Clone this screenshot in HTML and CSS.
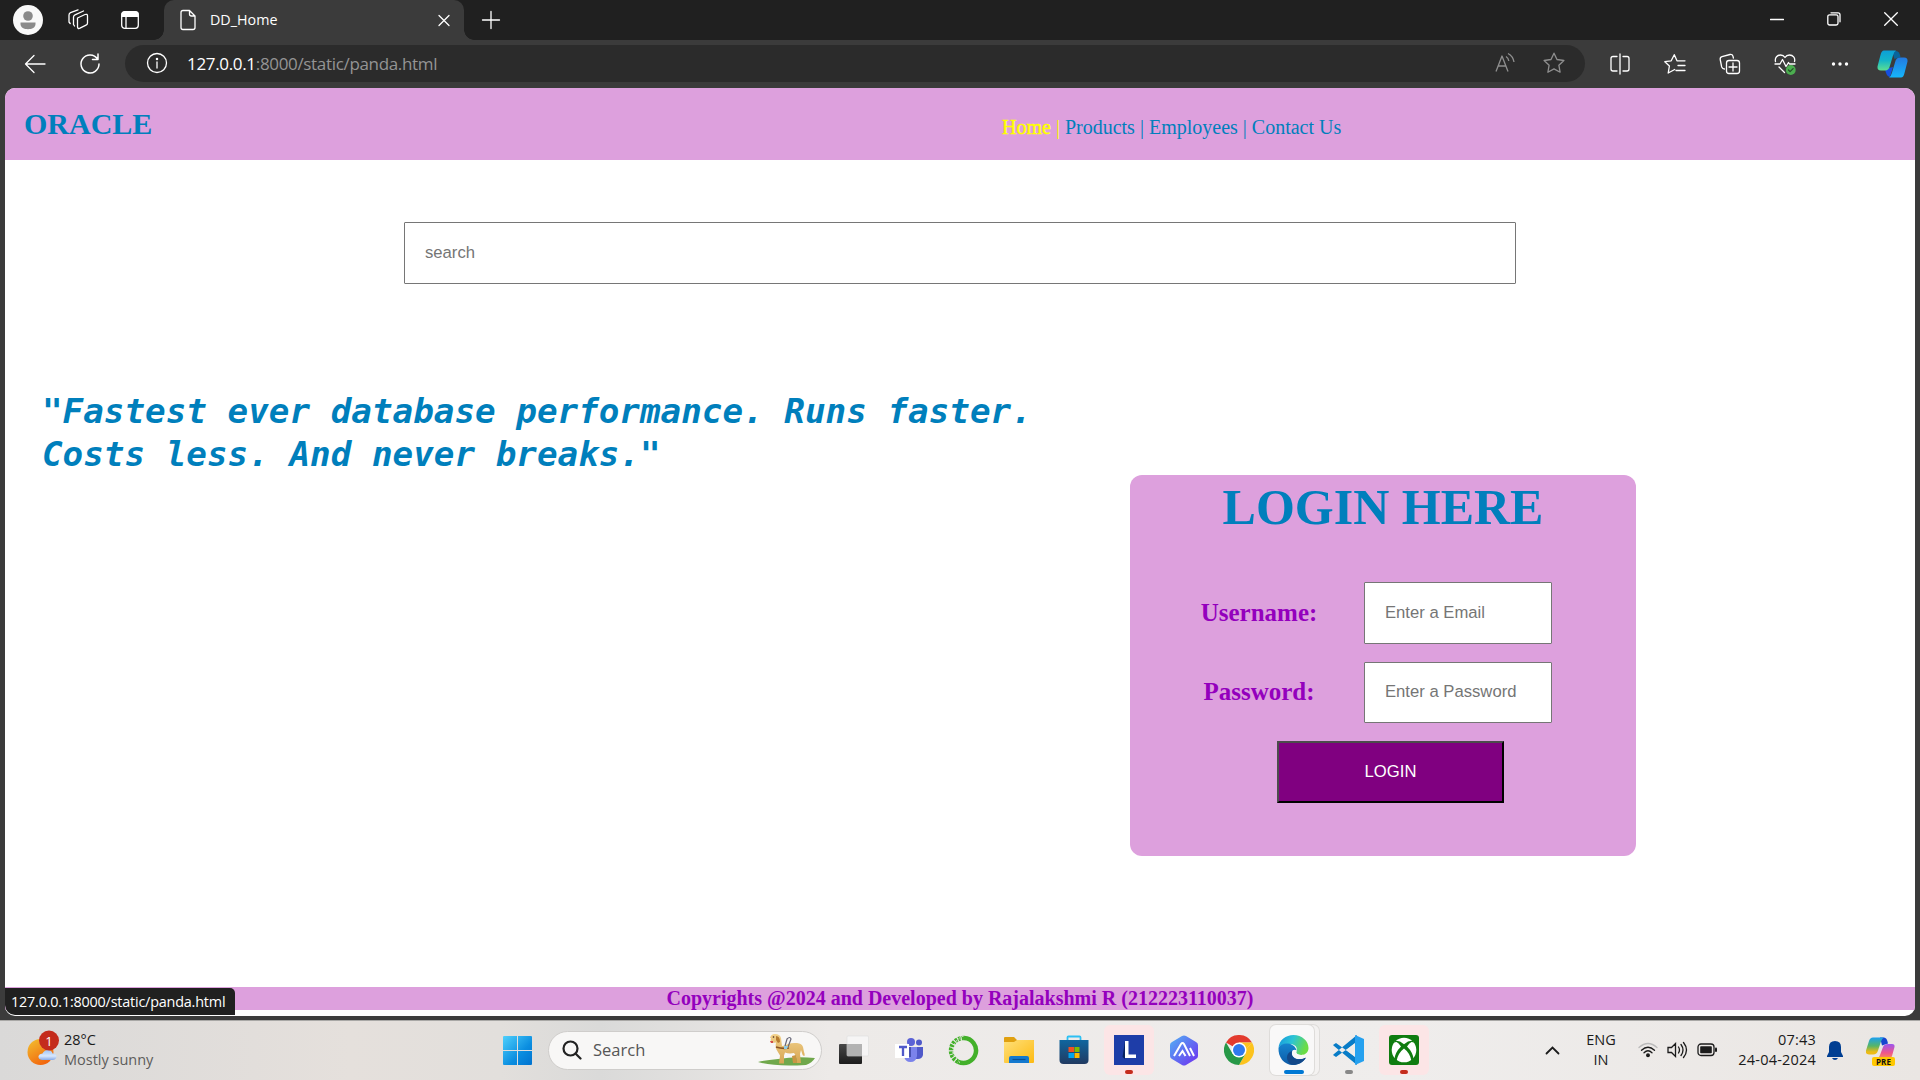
FILE: index.html
```html
<!DOCTYPE html>
<html lang="en">
<head>
<meta charset="utf-8">
<title>DD_Home</title>
<link rel="stylesheet" href="styles.css">
</head>
<body>
<div class="tabbar">
  <span class="slot w56"><svg width="30" height="30" viewBox="0 0 30 30"><circle cx="15" cy="15" r="15" fill="#f9f9f9"/><circle cx="15" cy="11" r="4.8" fill="#8a8a8a"/><path d="M7.5 17.5h15v1.5c0 3.500-3.500 5.200-7.500 5.200s-7.500-1.700-7.500-5.200z" fill="#8a8a8a"/></svg></span>
  <span class="slot w44"><svg class="line" width="22" height="22" viewBox="0 0 22 22"><path d="M10.500 9l7.500-3.500q2.500-.8 2.500 1.300v7.200q0 1.500-1.500 2.200l-6 3q-2.500 1-2.500-1.500zM6.500 15.500V8q0-1.500 1.500-2.200l8.500-3.800M6.500 15.500l1 1.500M2 13V6q0-1.600 1.500-2.300L11 .8M2 13l1.200 1.500"/></svg></span>
  <span class="slot w60"><svg width="20" height="20" viewBox="0 0 20 20"><rect x="1.700" y="1.700" width="16.600" height="16.600" rx="3" fill="none" stroke="#fff" stroke-width="1.300"/><path d="M1.500 7V4q0-2.500 2.500-2.500h12q2.500 0 2.500 2.500v3z" fill="#fff"/><path d="M6 7v11" stroke="#fff" stroke-width="1.300"/></svg></span>
  <div class="tab">
    <svg class="line" width="20" height="22" viewBox="0 0 20 22"><path d="M11.500 1.500H5q-2 0-2 2v15q0 2 2 2h10q2 0 2-2V7zM11.500 1.500V5q0 2 2 2H17"/></svg>
    <span class="tab-title">DD_Home</span>
    <svg class="line tab-close" width="20" height="20" viewBox="0 0 20 20"><path d="M5 5.500l10 10M15 5.500l-10 10"/></svg>
  </div>
  <span class="slot w53"><svg class="line" width="20" height="20" viewBox="0 0 20 20"><path d="M10 1.500v17M1.500 10h17"/></svg></span>
  <div class="window-buttons">
    <span class="slot w57"><svg class="line" width="14" height="14" viewBox="0 0 14 14"><path d="M.5 7.500h13"/></svg></span>
    <span class="slot w57"><svg class="line" width="14" height="14" viewBox="0 0 14 14"><rect x=".8" y="2.800" width="10.200" height="10.200" rx="1.800"/><path d="M4 .8h7q2 0 2 2v7"/></svg></span>
    <span class="slot w57"><svg class="line" width="14" height="14" viewBox="0 0 14 14"><path d="M.7.7l12.600 12.600M13.300.7L.7 13.300"/></svg></span>
  </div>
</div>

<div class="toolbar">
  <span class="slot w66"><svg class="line" width="22" height="20" viewBox="0 0 22 20"><path d="M10 1.500L1.500 10l8.500 8.500M1.500 10H21"/></svg></span>
  <span class="slot w44"><svg class="line thick" width="22" height="22" viewBox="0 0 22 22"><path d="M18.500 6A9 9 0 1 0 20 11M19 1v5.500h-5.500"/></svg></span>
  <div class="address">
    <svg class="line" width="22" height="22" viewBox="0 0 22 22"><circle cx="11" cy="11" r="9.500"/><path d="M11 10v6"/><circle cx="11" cy="7" r=".6"/></svg>
    <span class="url"><b>127.0.0.1</b>:8000/static/panda.html</span>
    <svg class="dim" width="22" height="22" viewBox="0 0 22 22"><path d="M2 19.500L8 4l6 15.500M4 14h8M12 4.500q2.500 1.500 2.800 4.500M14 1.500q5 2.500 6 8.500"/></svg>
    <svg class="dim" width="22" height="22" viewBox="0 0 22 22"><path d="M11 1.200l3 6.300 6.900 1-5 4.800 1.200 6.900-6.100-3.300-6.100 3.300 1.200-6.900-5-4.800 6.900-1z"/></svg>
  </div>
  <span class="slot w55 first"><svg class="line" width="22" height="22" viewBox="0 0 22 22"><path d="M8 3.500H4q-2 0-2 2v10.500q0 2 2 2h4M14 3.500h4q2 0 2 2v10.500q0 2-2 2h-4M11 1v20"/></svg></span>
  <span class="slot w55"><svg class="line" width="22" height="22" viewBox="0 0 22 22"><path d="M13 7.800L10.300 1.700 7.200 7.800l-6.400.9L5.400 13l-1.200 7 6.500-3.500M13 7.800H21M14 12.500h7M12 17.500h9"/></svg></span>
  <span class="slot w55"><svg class="line" width="22" height="22" viewBox="0 0 22 22"><rect x="7.500" y="7.500" width="13" height="13" rx="2.500"/><path d="M14 10v8M10 14h8M5.500 16q-2 0-2.800-2L1.200 6.500q-.3-2.200 1.800-2.800l8-2.200q2.300-.4 3 1.800l.4 1.700"/></svg></span>
  <span class="slot w55"><svg class="line" width="22" height="22" viewBox="0 0 22 22"><path d="M1.500 8.500C.5 4.500 3.500 2 6.500 2q3 0 4.500 2.500Q12.500 2 15.500 2c3.500 0 6 3 5 6.500M1 11h5l2.500-4.500 3.500 7 2.500-4L15.500 11H21M5 14l5.500 5.500"/><circle cx="16.800" cy="17" r="4.900" fill="#4cae50" stroke="none"/><path d="M14.500 17l1.600 1.600 3-3" stroke="#254f27"/></svg></span>
  <span class="slot w55"><svg width="18" height="6" viewBox="0 0 18 6"><circle cx="2.500" cy="3" r="1.700" fill="#fff"/><circle cx="9" cy="3" r="1.700" fill="#fff"/><circle cx="15.500" cy="3" r="1.700" fill="#fff"/></svg></span>
  <span class="slot w51"><svg width="31" height="28" viewBox="0 0 31 28"><defs><linearGradient id="ca" x1="0" y1="0" x2="0" y2="1"><stop offset="0" stop-color="#0c9fd8"/><stop offset=".5" stop-color="#14b5c8"/><stop offset="1" stop-color="#5ddf91"/></linearGradient><linearGradient id="cb" x1="0" y1="0" x2="0" y2="1"><stop offset="0" stop-color="#2379e0"/><stop offset="1" stop-color="#15b6fb"/></linearGradient></defs><path d="M15 1h4q3.500 0 4.500 6l-6 2z" fill="#08649b"/><path d="M8 19l8-2-3 10q-4-1-5-8z" fill="#1550e0"/><path d="M7 .5h12q-2 1-3 5l-3 10q-1 5-5 5H4q-4 0-3.500-4L3.500 5Q4.500.5 7 .5z" fill="url(#ca)"/><path d="M24 27.500H12q2-1 3-5l3-10q1-5 5-5h4q4 0 3.500 4L27.500 23q-1 4.500-3.500 4.500z" fill="url(#cb)"/></svg></span>
</div>

<main class="viewport">
  <header class="site-header">
    <h1 class="brand">ORACLE</h1>
    <nav class="site-nav"><a class="current"><span class="strong">Home</span> | </a><a>Products | </a><a>Employees | </a><a>Contact Us</a></nav>
  </header>
  <input class="field search" type="text" placeholder="search">
  <div class="hero">
    <p class="quote">"Fastest ever database performance. Runs faster.<br>Costs less. And never breaks."</p>
    <form class="login">
      <h2 class="login-title">LOGIN HERE</h2>
      <div class="row"><label class="label">Username:</label><input class="field" type="text" placeholder="Enter a Email"></div>
      <div class="row"><label class="label second">Password:</label><input class="field short" type="password" placeholder="Enter a Password"></div>
      <button class="submit" type="button">LOGIN</button>
    </form>
  </div>
  <footer class="site-footer">Copyrights @2024 and Developed by Rajalakshmi R (212223110037)</footer>
  <div class="status">127.0.0.1:8000/static/panda.html</div>
</main>

<div class="taskbar">
  <div class="weather">
    <svg width="34" height="36" viewBox="0 0 34 36"><defs><linearGradient id="sun" x1="0" y1="0" x2=".6" y2="1"><stop offset="0" stop-color="#f2c230"/><stop offset="1" stop-color="#f2650d"/></linearGradient><linearGradient id="cl" x1="0" y1="0" x2="0" y2="1"><stop offset="0" stop-color="#9fc4f5"/><stop offset=".6" stop-color="#d9e8fc"/><stop offset="1" stop-color="#86a9e8"/></linearGradient></defs><circle cx="13.500" cy="22" r="13" fill="url(#sun)"/><path d="M15 30q-4-.5-3.500-4 .8-2.500 4-2.500 2-4 6-3.500 3.500.5 4 3.500 4 0 4 3.200-.3 3-4 3.300z" fill="url(#cl)"/><circle cx="22" cy="10.500" r="10" fill="#c42b1c"/></svg>
    <span class="badge">1</span>
    <div class="weather-text"><div>28°C</div><div class="muted">Mostly sunny</div></div>
  </div>
  <span class="slot w55"><svg width="29" height="29" viewBox="0 0 29 29"><defs><linearGradient id="win" x1="0" y1="0" x2="1" y2="1"><stop offset="0" stop-color="#4fd0fc"/><stop offset=".6" stop-color="#0b8ee0"/><stop offset="1" stop-color="#0072cf"/></linearGradient></defs><path d="M1 0h13v14H0V1q0-1 1-1zM15 0h13q1 0 1 1v13H15zM0 15h14v14H1q-1 0-1-1zM15 15h14v13q0 1-1 1H15z" fill="url(#win)"/></svg></span>
  <div class="searchbox">
    <svg width="20" height="20" viewBox="0 0 20 20" fill="none" stroke="#222" stroke-width="2.200" stroke-linecap="round"><circle cx="8.500" cy="8.500" r="7"/><path d="M13.500 13.500l5 5"/></svg>
    <span>Search</span>
    <svg class="dog" width="57" height="34" viewBox="0 0 57 34"><defs><linearGradient id="fur" x1="0" y1="0" x2="0" y2="1"><stop offset="0" stop-color="#f2d28c"/><stop offset="1" stop-color="#d6a552"/></linearGradient></defs><path d="M0 29q8-2 20-3 18-3 37-1-3 5-9 7-32 2-48-3z" fill="#70a84c"/><path d="M12 5q1-4 5-4 5 0 6 4l1 8q3 0 6-2 4-1.500 9-1 5 .5 6 4l1 5q1 2 .5 4-2 0-2.500-3l-1-3-1 4 1 9h-4l-1-7-2-3q-5 1-9-.5l-1 3v8h-5l1-8-3-5q-2-3-1-8l-4 .5q-2-1-1-5z" fill="url(#fur)"/><path d="M18 3q4 0 4 6l-2 1-2-3z" fill="#b77c30"/><path d="M38 22l1 8h-4l-1-7z" fill="#c99644"/><path d="M18 14q6 2 13 1" fill="none" stroke="#8a5424" stroke-width="1.600"/><path d="M27 13l2-7q3-3 4 0l-3 8" fill="none" stroke="#667" stroke-width="1.200"/><path d="M26 13l4 0-1 3h-3z" fill="#8ecbe7"/><circle cx="15.500" cy="4" r=".8" fill="#422"/><path d="M12 8h3v2h-2z" fill="#d34d49"/></svg>
  </div>
  <div class="apps">
    <span class="slot w55"><svg width="31" height="30" viewBox="0 0 31 30"><defs><linearGradient id="tv" x1="0" y1="0" x2="0" y2="1"><stop offset="0" stop-color="#484848"/><stop offset="1" stop-color="#1c1c1c"/></linearGradient></defs><rect x="1" y="9" width="23" height="20" rx="1" fill="url(#tv)"/><rect x="9" y="1" width="21.500" height="20" rx="1" fill="#f7f7f7" fill-opacity=".8" stroke="#ddd" stroke-width=".6"/><path d="M9 9h15v12H9z" fill="#aaa" fill-opacity=".8"/></svg></span>
    <span class="slot w55"><svg width="28" height="26" viewBox="0 0 28 26"><circle cx="16" cy="5" r="4" fill="#5b62d6"/><circle cx="24" cy="5.500" r="3" fill="#5059c9"/><path d="M20 10h8v8q-1 4-5 4h-3z" fill="#5059c9"/><path d="M9 10h13v9q-1 6-6.500 6T9 19z" fill="#7b83eb"/><path d="M13 10h3v10h-4z" fill="#464fae"/><path d="M0 7h14v14H0z" fill="#fff"/><path d="M4 10h8M8 10v9" stroke="#5059c9" stroke-width="2.300"/></svg></span>
    <span class="slot w55"><svg width="31" height="31" viewBox="0 0 31 31" fill="none" stroke="#43b02a"><path d="M16 3a12.500 12.500 0 1 1-6 23.700" stroke-width="4.500"/><path d="M10 26.700A12.500 12.500 0 0 1 16 3" stroke-width="4.500" stroke-dasharray="2.500 1"/><path d="M12 27.500A14.500 14.500 0 0 1 16 1" stroke="#efedeb" stroke-dasharray="1.500 2.500"/><path d="M9 25A12.500 12.500 0 0 1 13 4" stroke="#efedeb" stroke-dasharray="1 3"/></svg></span>
    <span class="slot w55"><svg width="30" height="28" viewBox="0 0 30 28"><defs><linearGradient id="fo" x1="0" y1="0" x2="1" y2="1"><stop offset="0" stop-color="#ffe07a"/><stop offset="1" stop-color="#fdba12"/></linearGradient></defs><path d="M0 2q0-1 1-1h9l3 3h16q1 0 1 1v5H0z" fill="#e0a010"/><path d="M0 6h10l3-2h16q1 0 1 1v21q0 1-1 1H1q-1 0-1-1z" fill="url(#fo)"/><path d="M5 27v-5q0-2 2-2h16q2 0 2 2v5z" fill="#1479cf"/><path d="M8.500 23.500h13" stroke="#0a4f94" stroke-width="1.200"/></svg></span>
    <span class="slot w55"><svg width="30" height="30" viewBox="0 0 30 30"><defs><linearGradient id="st" x1="0" y1="0" x2="0" y2="1"><stop offset="0" stop-color="#10669f"/><stop offset="1" stop-color="#213a61"/></linearGradient></defs><path d="M8.500 5.500v-3q0-1 1-1h11q1 0 1 1v3" fill="none" stroke="#2dc0f3" stroke-width="1.800"/><path d="M.5 5h29v20q0 4-4 4h-21q-4 0-4-4z" fill="url(#st)"/><path d="M9.500 12H15v5H9.500z" fill="#f25022"/><path d="M15.500 12h5v5h-5z" fill="#7fba00"/><path d="M9.500 18H15v5H9.500z" fill="#00a4ef"/><path d="M15.500 18h5v5h-5z" fill="#ffb900"/></svg></span>
    <span class="slot w55"><span class="tile alert"><svg width="30" height="30" viewBox="0 0 30 30"><path d="M0 0h30v30H0z" fill="#1e3da8"/><path d="M11 6L8.500 22 11 24z" fill="#06225f"/><path d="M11 6h3.500v13.500H22V23H11z" fill="#fff"/></svg></span></span>
    <span class="slot w55"><svg width="28" height="31" viewBox="0 0 28 31"><defs><linearGradient id="hx" x1="0" y1="0" x2="1" y2="1"><stop offset="0" stop-color="#52b2f4"/><stop offset="1" stop-color="#6f2df0"/></linearGradient></defs><path d="M12 1q2-1 4 0l10 6q2 1 2 3v11q0 2-2 3l-10 6q-2 1-4 0L2 24q-2-1-2-3V10q0-2 2-3z" fill="url(#hx)"/><path d="M4 21l7-12q1.500-2 3 0l6 12M9 21l3.500-5 3 5M20 13l4 8" fill="none" stroke="#fff" stroke-width="2"/></svg></span>
    <span class="slot w55"><svg width="30" height="30" viewBox="0 0 30 30"><path d="M15 15L2 7.500A15 15 0 0 1 28 7.500H15z" fill="#e33b2e"/><path d="M15 15h6.500L28 7.500A15 15 0 0 1 15 30l6.500-11z" fill="#fcc31e"/><path d="M2 7.500A15 15 0 0 0 15 30l6.500-11.200L15 21 8.500 18.500z" fill="#279847"/><path d="M15 7.500h13.200L21.500 15z" fill="#fcc31e"/><circle cx="15" cy="15" r="7.500" fill="#fff"/><circle cx="15" cy="15" r="6" fill="#3079ed"/></svg></span>
    <span class="slot w55"><span class="tile active"><svg width="31" height="30" viewBox="0 0 31 30"><defs><linearGradient id="e1" x1="0" y1="0" x2="1" y2=".3"><stop offset="0" stop-color="#1495df"/><stop offset=".5" stop-color="#2cc4d5"/><stop offset="1" stop-color="#6bdc46"/></linearGradient><linearGradient id="e2" x1="0" y1="0" x2="0" y2="1"><stop offset="0" stop-color="#1684cf"/><stop offset="1" stop-color="#0d5aa6"/></linearGradient></defs><path d="M.5 13C1 5 8 0 15.500 0 24 0 30.500 6 30.500 13c0 4-3 7-7 7s-6-1.500-5-3.500C20 12 17 9 11 9 5 9 1.500 11 .5 13z" fill="url(#e1)"/><path d="M.5 13C2 9.500 6 8 10 8.500c5 .5 8 4 8.500 7-3-1.500-5 1-4.500 3.500 1 5 8 6.500 14 3.500-3 5-8 7.500-13 7.500C6 30 0 22 .5 13z" fill="url(#e2)"/><path d="M14 16c-2 7 5 11 14 6.500-3 6-10 8-15 7-6-4-5-12 1-13.500z" fill="#134889"/><path d="M14.500 15.500q2.500-1.500 4 0-1 2 .5 3.300 2 1.500 6 1l3 2.700q-7 2.500-11 .5-4-2.500-2.500-7.500z" fill="#f9f8f8"/></svg></span></span>
    <span class="slot w55"><span class="tile plain"><svg width="31" height="30" viewBox="0 0 31 30"><path d="M0 10l3-2L24 23v7L1 11zM0 20l3 2L24 7V0L1 19z" fill="#087cc7"/><path d="M22 0l9 4v22l-9 4z" fill="#26a1ef"/><path d="M22 8v14l-9-7z" fill="#efedeb"/></svg></span></span>
    <span class="slot w55"><span class="tile alert"><svg width="30" height="30" viewBox="0 0 30 30"><rect width="30" height="30" rx="3" fill="#107c10"/><circle cx="15" cy="15" r="12.300" fill="#fff"/><path d="M6 6q4-.8 9 3.200Q20 5.200 24 6l1.500 1.500-3-.5q-2 .7-4.500 4.500 6 6 6.500 12.500l-2 2Q21 18 15 13.500 9 18 7.500 26l-2-2Q6 17.500 12 11.500 9.500 7.700 7.500 7l-3 .5z" fill="#107c10"/></svg></span></span>
  </div>
  <div class="tray">
    <svg class="ink chevron" width="15" height="9" viewBox="0 0 15 9"><path d="M1.500 7.500l6-6 6 6"/></svg>
    <div class="lang">ENG<br>IN</div>
    <svg class="ink thin" width="20" height="16" viewBox="0 0 20 16"><path d="M1 5.500q9-8 18 0" stroke="#bbb"/><path d="M3.500 8.200q6.500-6 13 0M6 10.800q4-4 8 0"/><circle cx="10" cy="13.200" r="1.300" fill="#1b1b1b"/></svg>
    <svg class="ink thin" width="21" height="18" viewBox="0 0 21 18"><path d="M1 6.500h3.500l4-4v13l-4-4H1zM11.500 6q2 3 0 6M14 3.500q4 5.500 0 11M16.500 1.500q6 7.500 0 15"/></svg>
    <svg class="ink thin" width="21" height="14" viewBox="0 0 21 14"><rect x="1" y="1" width="16" height="11.500" rx="3"/><rect x="3.200" y="3.200" width="11.600" height="7.100" rx=".8" fill="#1b1b1b" stroke="none"/><path d="M19 5.500v2.500" stroke-width="2"/></svg>
    <div class="clock">07:43<br>24-04-2024</div>
    <svg width="16" height="19" viewBox="0 0 16 19"><path d="M8 0q6 0 6 6v5l2 4v1H0v-1l2-4V6q0-6 6-6zM5 17h6q-1 2-3 2t-3-2z" fill="#003e92"/></svg>
    <div class="copilot"><svg width="29" height="28" viewBox="0 0 29 28"><defs><linearGradient id="p1" x1="0" y1="0" x2="0" y2="1"><stop offset="0" stop-color="#1ba0f0"/><stop offset=".5" stop-color="#57b567"/><stop offset=".85" stop-color="#edbb16"/></linearGradient><linearGradient id="p2" x1="0" y1="0" x2="0" y2="1"><stop offset="0" stop-color="#9b55ef"/><stop offset=".6" stop-color="#f0568a"/><stop offset="1" stop-color="#f79450"/></linearGradient></defs><path d="M14 .5h4q3 0 4 6l-6 2z" fill="#1744cf"/><path d="M7 .5h11q-2 1-3 4l-3 9q-1 4-5 4H3q-4 0-3-4L3 4Q4 .5 7 .5z" fill="url(#p1)"/><path d="M22 22H11q2-1 3-4l3-8q1-3 5-3h4q3 0 2.500 3L26 19q-1 3-4 3z" fill="url(#p2)"/></svg><span class="pre">PRE</span></div>
  </div>
</div>
</body>
</html>
```
FILE: styles.css
```css
* { box-sizing: border-box; }
body {
  margin: 0;
  width: 1920px;
  height: 1080px;
  overflow: hidden;
  display: flex;
  flex-direction: column;
  background: #3b3b3b;
  font-family: "Open Sans", "Noto Sans", sans-serif;
}
svg { display: block; flex: none; }
.line { fill: none; stroke: #fff; stroke-width: 1.3; stroke-linecap: round; stroke-linejoin: round; }
.line.thick { stroke-width: 1.5; }
.dim { fill: none; stroke: #8f8f8f; stroke-width: 1.3; stroke-linejoin: round; }
.slot { display: flex; flex: none; align-items: center; justify-content: center; }
.w44 { width: 44px; }
.w51 { width: 51px; }
.w53 { width: 53px; }
.w55 { width: 55px; }
.w56 { width: 56px; }
.w57 { width: 57px; }
.w60 { width: 60px; }
.w66 { width: 66px; }

/* Tab strip */
.tabbar { display: flex; height: 40px; flex: none; background: #202020; }
.tab {
  position: relative;
  display: flex;
  align-items: center;
  gap: 12px;
  width: 300px;
  margin-left: 4px;
  padding: 0 10px 0 14px;
  background: #3b3b3b;
  border-radius: 10px 10px 0 0;
  color: #fff;
  font-size: 14.3px;
}
.tab::before, .tab::after { content: ""; position: absolute; bottom: 0; width: 10px; height: 10px; }
.tab::before { left: -10px; background: radial-gradient(circle at 0 0, transparent 9.5px, #3b3b3b 10px); }
.tab::after { right: -10px; background: radial-gradient(circle at 100% 0, transparent 9.5px, #3b3b3b 10px); }
.tab-title { padding-bottom: 2px; }
.tab-close { margin-left: auto; }
.window-buttons { display: flex; margin-left: auto; height: 38px; padding-right: 1px; }

/* Address row */
.toolbar { display: flex; align-items: center; height: 48px; flex: none; padding: 0 0 0 2px; }
.address {
  display: flex;
  align-items: center;
  width: 1460px;
  height: 37px;
  margin: 0 0 2px 13px;
  padding: 0 20px 0 21px;
  border-radius: 19px;
  background: #2b2b2b;
  gap: 27px;
}
.url { flex: 1; margin-left: -8px; color: #949494; font-size: 17px; letter-spacing: -.33px; }
.url b { color: #fff; font-weight: 400; }
.toolbar > .slot { margin-bottom: 1px; }
.toolbar > .first { margin-left: 7px; }

/* Page */
.viewport {
  position: relative;
  display: flex;
  flex-direction: column;
  flex: none;
  width: 1910px;
  height: 928px;
  margin: 0 5px;
  background: #fff;
  border-radius: 10px;
  overflow: hidden;
  font-family: "Liberation Serif", serif;
}
.site-header {
  display: grid;
  grid-template-columns: 978px 1fr;
  align-items: baseline;
  flex: none;
  height: 72px;
  padding: 19px 0 0 19px;
  background: #dda0dd;
  color: #007fbc;
}
.brand { margin: 0; font-size: 30px; line-height: 34px; }
.site-nav { font-size: 20px; white-space: pre; }
.site-nav .current { color: #ff0; }
.strong { -webkit-text-stroke: .5px #ff0; }
.field {
  width: 188px;
  height: 62px;
  padding: 0 19px 0 20px;
  border: 1px solid #767676;
  border-radius: 1px;
  background: #fff;
  font: 16.67px "Liberation Sans", sans-serif;
}
.field.short { height: 61px; padding-bottom: 2px; }
.field::placeholder { color: #757575; opacity: 1; }
.search { width: 1112px; flex: none; margin: 62px 0 0 399px; }
.hero { display: flex; align-items: flex-start; padding-left: 37px; }
.quote {
  width: 1088px;
  margin: 106px 0 0;
  color: #007fbc;
  font: italic bold 34.25px/43px "DejaVu Sans Mono", monospace;
}
.login {
  width: 506px;
  height: 381px;
  margin-top: 191px;
  border-radius: 12px;
  background: #dda0dd;
}
.login-title {
  margin: 4px 0 46px;
  text-align: center;
  color: #007fbc;
  font-size: 50px;
  line-height: 57px;
}
.row { display: flex; align-items: center; margin-bottom: 18px; padding-left: 70px; }
.label { width: 118px; margin-right: 46px; text-align: center; color: #9400bd; font-size: 25px; font-weight: bold; }
.label.second { padding-bottom: 2px; }
.submit {
  display: block;
  width: 227px;
  height: 62px;
  margin-left: 147px;
  border: 2px solid;
  border-color: #4c4c4c #000 #000 #4c4c4c;
  background: #800080;
  color: #fff;
  font: 16.67px "Liberation Sans", sans-serif;
}
.site-footer {
  height: 23px;
  margin: auto 0 6px;
  background: #dda0dd;
  color: #9400bd;
  text-align: center;
  font-size: 20px;
  line-height: 23px;
  font-weight: bold;
}
.status {
  position: absolute;
  left: 0;
  bottom: 1px;
  width: 230px;
  height: 27px;
  padding-left: 6px;
  border-radius: 0 5px 0 10px;
  background: #202020;
  color: #fff;
  font: 14.4px/27px "Open Sans", sans-serif;
  letter-spacing: -.2px;
}

/* Taskbar */
.taskbar {
  display: flex;
  align-items: center;
  height: 60px;
  margin-top: 4px;
  padding-bottom: 1px;
  border-top: 1px solid #a9a8a6;
  background: linear-gradient(90deg, #dad9d8 0, #e5e0dc 350px, #e2dfdc 500px, #dadad9 600px, #edeae8 830px, #efedec 1400px, #eae6e3 1920px);
  color: #1b1b1b;
  font-size: 14.5px;
  line-height: 20px;
}
.weather { position: relative; display: flex; gap: 3px; width: 490px; padding-left: 27px; }
.badge { position: absolute; left: 39px; top: 1px; width: 20px; text-align: center; color: #fff; font-size: 13px; line-height: 20px; }
.muted { color: #5d5c5b; }
.searchbox {
  display: flex;
  align-items: center;
  width: 274px;
  height: 39px;
  margin: 0 4px 0 3px;
  padding: 0 6px 0 13px;
  border: 1px solid #cfcdcb;
  border-radius: 20px;
  background: #f8f7f6;
  color: #555;
  font-size: 16.5px;
}
.searchbox span { margin-left: 11px; }
.dog { margin-left: auto; }
.apps { display: flex; }
.tile {
  position: relative;
  display: flex;
  align-items: center;
  justify-content: center;
  width: 50px;
  height: 50px;
  border-radius: 6px;
}
.tile::after { content: ""; position: absolute; bottom: 1px; width: 8px; height: 4px; border-radius: 2px; background: #c42b1c; }
.alert { background: #fce5e6; }
.active { width: 44px; margin-left: -4px; background: #f9f8f8; box-shadow: 0 0 0 1px #dedcda, 5px 0 0 0 #f4f2f1, 5px 0 0 1px #dedcda; }
.active svg { margin-left: 4px; }
.active::after { width: 20px; margin-left: 4px; background: #0078d4; }
.plain::after { background: #888; }
.tray { display: flex; align-items: center; margin-left: auto; padding-right: 25px; }
.ink { fill: none; stroke: #1b1b1b; stroke-width: 1.8; stroke-linecap: round; }
.thin { stroke-width: 1.3; }
.lang { width: 50px; margin: 0 12px 0 16px; text-align: center; }
.thin + .thin { margin-left: 9px; }
.clock { width: 86px; margin: 0 11px 0 12px; text-align: right; white-space: nowrap; letter-spacing: .2px; }
.copilot { display: flex; flex-direction: column; align-items: flex-end; width: 30px; margin-left: 22px; margin-top: 2px; }
.pre { width: 23px; height: 9px; margin-top: -8px; border-radius: 2px; background: #ffc800; color: #111; font: bold 8px/9px "Open Sans", sans-serif; text-align: center; }
```
